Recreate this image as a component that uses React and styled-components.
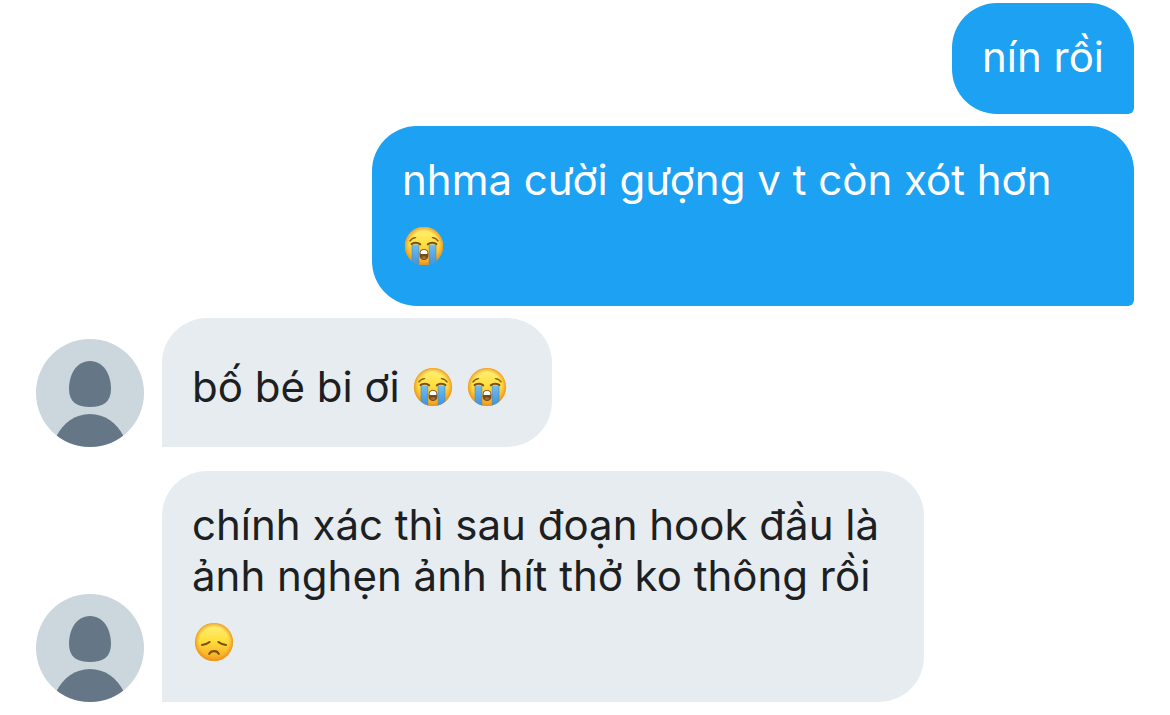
import { useId } from "react";
import styled, { createGlobalStyle } from "styled-components";

const messages = [
  { id: 1, mine: true, lines: [{ text: "nín rồi" }] },
  {
    id: 2,
    mine: true,
    wide: true,
    lines: [{ text: "nhma cười gượng v t còn xót hơn" }, { emojis: ["sob"] }],
  },
  {
    id: 3,
    mine: false,
    lines: [{ text: "bố bé bi ơi", emojis: ["sob", "sob"] }],
  },
  {
    id: 4,
    mine: false,
    wide: true,
    lines: [
      { text: "chính xác thì sau đoạn hook đầu là" },
      { text: "ảnh nghẹn ảnh hít thở ko thông rồi" },
      { emojis: ["sad"] },
    ],
  },
];

const Avatar = () => {
  const clip = useId();
  return (
    <AvatarIcon viewBox="0 0 108 108" role="img" aria-label="Avatar">
      <clipPath id={clip}>
        <circle cx="54" cy="54" r="54" />
      </clipPath>
      <g clipPath={`url(#${clip})`}>
        <rect width="108" height="108" fill="#ccd6dd" />
        <path
          d="M54 22C40 22 33 36 33 50C33 63 41 68 54 68S75 63 75 50C75 36 68 22 54 22Z"
          fill="#657786"
        />
        <path
          d="M54 75C39 75 27 84 20 98V110H88V98C81 84 69 75 54 75Z"
          fill="#657786"
        />
      </g>
    </AvatarIcon>
  );
};

const Emoji = ({ name }) => {
  const id = useId();
  return (
    <EmojiIcon
      viewBox="0 0 45 45"
      role="img"
      aria-label={name === "sob" ? "😭" : "😞"}
    >
      <defs>
        <linearGradient id={`${id}f`} x1="0" y1="0" x2="0" y2="1">
          <stop offset="0" stopColor="#fff27a" />
          <stop offset="0.45" stopColor="#ffdf40" />
          <stop offset="1" stopColor="#f7a41c" />
        </linearGradient>
        <radialGradient id={`${id}e`}>
          <stop offset="0.76" stopColor="#f39a1c" stopOpacity="0" />
          <stop offset="1" stopColor="#e88d22" stopOpacity="0.85" />
        </radialGradient>
        <linearGradient id={`${id}t`} x1="0" y1="0" x2="0" y2="1">
          <stop offset="0" stopColor="#74bdf0" />
          <stop offset="1" stopColor="#3b8fe0" />
        </linearGradient>
        <clipPath id={`${id}c`}>
          <circle cx="22" cy="23" r="19.1" />
        </clipPath>
      </defs>
      <circle cx="22" cy="23" r="19.1" fill={`url(#${id}f)`} />
      <circle cx="22" cy="23" r="19.1" fill={`url(#${id}e)`} />
      {name === "sob" ? (
        <g clipPath={`url(#${id}c)`}>
          <path
            d="M10 21.5H16.8V43H10ZM27.2 21.5H34V43H27.2Z"
            fill={`url(#${id}t)`}
          />
          <path
            d="M10 21.5V43M16.8 21.5V43M27.2 21.5V43M34 21.5V43"
            stroke="#4b86a8"
            strokeWidth="0.6"
          />
          <path
            d="M9.6 21C11.5 19.2 15.8 19.2 18.2 21.3M34.4 21C32.5 19.2 28.2 19.2 25.8 21.3"
            fill="none"
            stroke="#7d5010"
            strokeWidth="2.1"
            strokeLinecap="round"
          />
          <path
            d="M8 17.9C9.4 15.8 11.4 14.8 13.6 14.6M36 17.9C34.6 15.8 32.6 14.8 30.4 14.6"
            fill="none"
            stroke="#8a5a14"
            strokeWidth="1.4"
            strokeLinecap="round"
          />
          <rect x="17.6" y="26" width="8.8" height="11" rx="4.3" fill="#754b19" />
          <path
            d="M18.6 31V29.6C18.8 25.9 25.2 25.9 25.4 29.6V31Z"
            fill="#fff"
          />
          <path
            d="M19.2 34.8C20.6 32.8 23.4 32.8 24.8 34.8C23.4 36.6 20.6 36.6 19.2 34.8Z"
            fill="#a66a35"
          />
        </g>
      ) : (
        <g fill="none" stroke="#7d5010" strokeLinecap="round">
          <path
            d="M10 26C13 25.7 15.4 24.8 17.6 23M34 26C31 25.7 28.6 24.8 26.4 23"
            strokeWidth="2.1"
          />
          <path d="M17.2 34.9C19 31.2 25 31.2 26.8 34.9" strokeWidth="2.1" />
        </g>
      )}
    </EmojiIcon>
  );
};

const Message = ({ message }) => {
  const { mine, wide, lines } = message;
  return (
    <MessageRow $mine={mine}>
      {!mine && <Avatar />}
      <Bubble $mine={mine} $wide={wide}>
        {lines.map((line, idx) => (
          <Line key={idx} $emoji={!!line.emojis}>
            {line.text && <Text>{line.text}</Text>}
            {line.emojis &&
              line.emojis.map((name, i) => <Emoji name={name} key={i} />)}
          </Line>
        ))}
      </Bubble>
    </MessageRow>
  );
};

const App = () => {
  return (
    <>
      <GlobalStyle />
      <Conversation>
        <Group>
          {messages.slice(0, 3).map((message) => (
            <Message message={message} key={message.id} />
          ))}
        </Group>
        <Group>
          {messages.slice(3).map((message) => (
            <Message message={message} key={message.id} />
          ))}
        </Group>
      </Conversation>
    </>
  );
};

const GlobalStyle = createGlobalStyle`
  * {
    box-sizing: border-box;
  }

  body {
    margin: 0;
    background: #fff;
    font-family: Inter, "Liberation Sans", sans-serif;
  }
`;

const Conversation = styled.main`
  display: flex;
  flex-direction: column;
  gap: 24px;
  padding: 3px 36px 12px;
`;

const Group = styled.section`
  display: flex;
  flex-direction: column;
  gap: 12px;
`;

const MessageRow = styled.div`
  display: flex;
  align-items: flex-end;
  justify-content: ${({ $mine }) => ($mine ? "flex-end" : "flex-start")};
  gap: 18px;
`;

const AvatarIcon = styled.svg`
  flex: none;
  width: 108px;
  height: 108px;
`;

const Bubble = styled.div`
  width: ${({ $wide }) => ($wide ? "100%" : "auto")};
  max-width: 762px;
  padding: 28px 30px 32px;
  border-radius: ${({ $mine }) =>
    $mine ? "45px 45px 6px 45px" : "45px 45px 45px 0"};
  background: ${({ $mine }) => ($mine ? "#1da1f2" : "#e6ecf0")};
  color: ${({ $mine }) => ($mine ? "#fff" : "#1c2022")};
  font-size: 42px;
  line-height: 51px;
`;

const Line = styled.div`
  display: flex;
  align-items: center;
  gap: 9px;
  min-height: ${({ $emoji }) => ($emoji ? "69px" : "51px")};
  padding: ${({ $emoji }) => ($emoji ? "11px 12px 0 0" : "0")};
`;

const Text = styled.span`
  &:not(:last-child) {
    padding-right: 2px;
  }
`;

const EmojiIcon = styled.svg`
  flex: none;
  width: 45px;
  height: 45px;
`;

export default App;
